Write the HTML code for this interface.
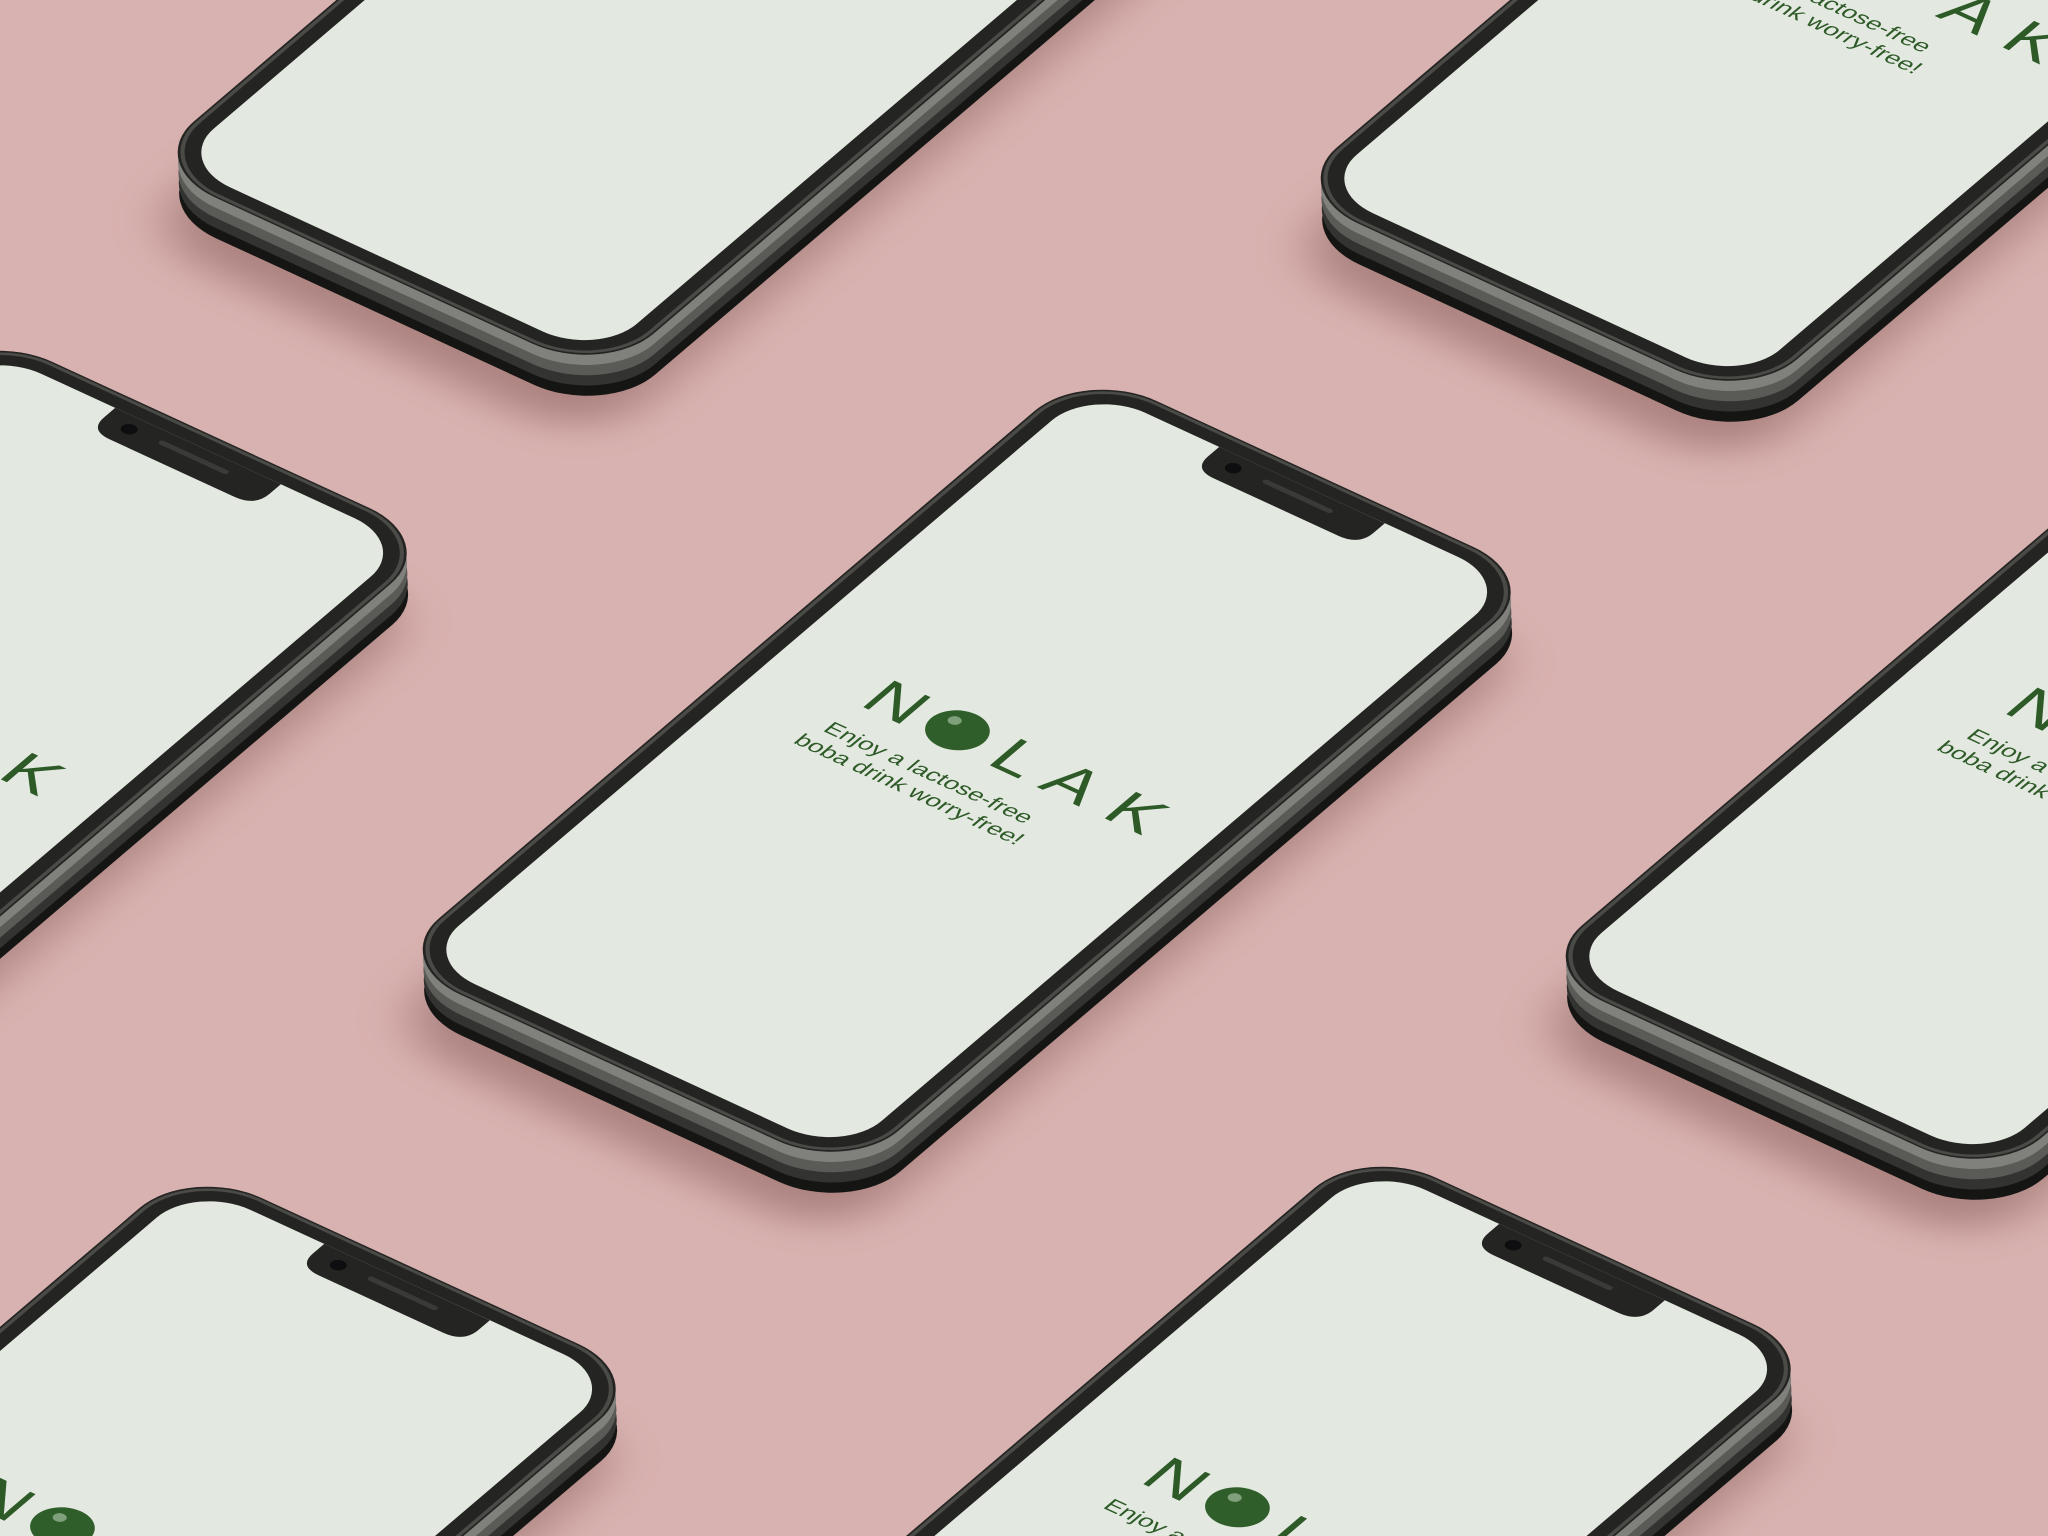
<!DOCTYPE html>
<html><head><meta charset="utf-8"><style>
html,body{margin:0;padding:0;width:2048px;height:1536px;overflow:hidden;background:#d8b2b0}
svg{display:block}
.t{font-family:"Liberation Sans",sans-serif;fill:#2e5a28}
</style></head><body>
<svg width="2048" height="1536" viewBox="0 0 2048 1536" xmlns="http://www.w3.org/2000/svg" style="overflow:hidden">
<defs>
<filter id="bl" x="-20%" y="-20%" width="140%" height="140%"><feGaussianBlur stdDeviation="18"/></filter>
<g id="sh"><rect x="40" y="70" width="400" height="860" rx="62" fill="#8a5e5c" opacity="0.55" filter="url(#bl)"/></g>
<g id="phone">
<rect x="28" y="38" width="400" height="860" rx="62" fill="#151514"/>
<rect x="21" y="28.5" width="400" height="860" rx="62" fill="#333331"/>
<rect x="14" y="19" width="400" height="860" rx="62" fill="#5a5a57"/>
<rect x="7" y="9.5" width="400" height="860" rx="62" fill="#80807c"/>
<rect x="0" y="0" width="400" height="860" rx="62" fill="#242422"/>
<rect x="3" y="3" width="394" height="854" rx="60" fill="none" stroke="#4a4a47" stroke-width="3"/>
<rect x="16" y="16" width="368" height="828" rx="48" fill="#e3e9e0"/>
<path d="M128 16 H272 V30 Q272 48 254 48 H146 Q128 48 128 30 Z" fill="#242422"/>
<circle cx="150" cy="30" r="6" fill="#0e0e10"/>
<rect x="175" y="26" width="60" height="5" rx="2.5" fill="#3a3a38"/>
</g>
</defs>

<g>
<use href="#sh" transform="matrix(1.15,0.53,-0.81,0.69,-303,-462)"/>
<use href="#sh" transform="matrix(1.15,0.53,-0.81,0.69,840,-429)"/>
<use href="#sh" transform="matrix(1.15,0.53,-0.81,0.69,1983,-403)"/>
<use href="#sh" transform="matrix(1.15,0.53,-0.81,0.69,-19,329)"/>
<use href="#sh" transform="matrix(1.15,0.53,-0.81,0.69,1085,368)"/>
<use href="#sh" transform="matrix(1.15,0.53,-0.81,0.69,2228,375)"/>
<use href="#sh" transform="matrix(1.15,0.53,-0.81,0.69,190,1165)"/>
<use href="#sh" transform="matrix(1.15,0.53,-0.81,0.69,1365,1145)"/>

<use href="#phone" transform="matrix(1.15,0.53,-0.81,0.69,-303,-462)"/>
<use href="#phone" transform="matrix(1.15,0.53,-0.81,0.69,840,-429)"/>
<use href="#phone" transform="matrix(1.15,0.53,-0.81,0.69,1983,-403)"/>
<use href="#phone" transform="matrix(1.15,0.53,-0.81,0.69,-19,329)"/>
<use href="#phone" transform="matrix(1.15,0.53,-0.81,0.69,1085,368)"/>
<use href="#phone" transform="matrix(1.15,0.53,-0.81,0.69,2228,375)"/>
<use href="#phone" transform="matrix(1.15,0.53,-0.81,0.69,190,1165)"/>
<use href="#phone" transform="matrix(1.15,0.53,-0.81,0.69,1365,1145)"/>
</g>

<g transform="matrix(1.15,0.53,-0.81,0.69,1085,368)">
<text class="t" x="95" y="415" font-size="56">N</text>
<circle cx="168" cy="396" r="23" fill="#2f5e2a"/><circle cx="160" cy="388" r="5" fill="#7fa07a"/>
<text class="t" x="205" y="415" font-size="56">L</text>
<text class="t" x="250" y="415" font-size="56">A</text>
<text class="t" x="305" y="415" font-size="56">K</text>
<text class="t" x="180" y="455" font-size="20" text-anchor="middle">Enjoy a lactose-free</text>
<text class="t" x="180" y="479" font-size="20" text-anchor="middle">boba drink worry-free!</text>
</g>
<g transform="matrix(1.15,0.53,-0.81,0.69,2228,375)">
<text class="t" x="95" y="415" font-size="56">N</text>
<circle cx="168" cy="396" r="23" fill="#2f5e2a"/>
<text class="t" x="205" y="415" font-size="56">L</text>
<text class="t" x="250" y="415" font-size="56">A</text>
<text class="t" x="305" y="415" font-size="56">K</text>
<text class="t" x="180" y="455" font-size="20" text-anchor="middle">Enjoy a lactose-free</text>
<text class="t" x="180" y="479" font-size="20" text-anchor="middle">boba drink worry-free!</text>
</g>
<g transform="matrix(1.15,0.53,-0.81,0.69,-19,329)">
<text class="t" x="305" y="415" font-size="56">K</text>
</g>
<g transform="matrix(1.15,0.53,-0.81,0.69,1983,-403)">
<text class="t" x="250" y="415" font-size="56">A</text>
<text class="t" x="305" y="415" font-size="56">K</text>
<text class="t" x="180" y="455" font-size="20" text-anchor="middle">Enjoy a lactose-free</text>
<text class="t" x="180" y="479" font-size="20" text-anchor="middle">boba drink worry-free!</text>
</g>
<g transform="matrix(1.15,0.53,-0.81,0.69,1365,1145)">
<text class="t" x="95" y="415" font-size="56">N</text>
<circle cx="168" cy="396" r="23" fill="#2f5e2a"/><circle cx="160" cy="388" r="5" fill="#7fa07a"/>
<text class="t" x="205" y="415" font-size="56">L</text>
<text class="t" x="180" y="455" font-size="20" text-anchor="middle">Enjoy a lactose-free</text>
</g>
<g transform="matrix(1.15,0.53,-0.81,0.69,190,1165)">
<text class="t" x="95" y="415" font-size="56">N</text>
<circle cx="168" cy="396" r="23" fill="#2f5e2a"/><circle cx="160" cy="388" r="5" fill="#7fa07a"/>
</g>
</svg>
</body></html>
